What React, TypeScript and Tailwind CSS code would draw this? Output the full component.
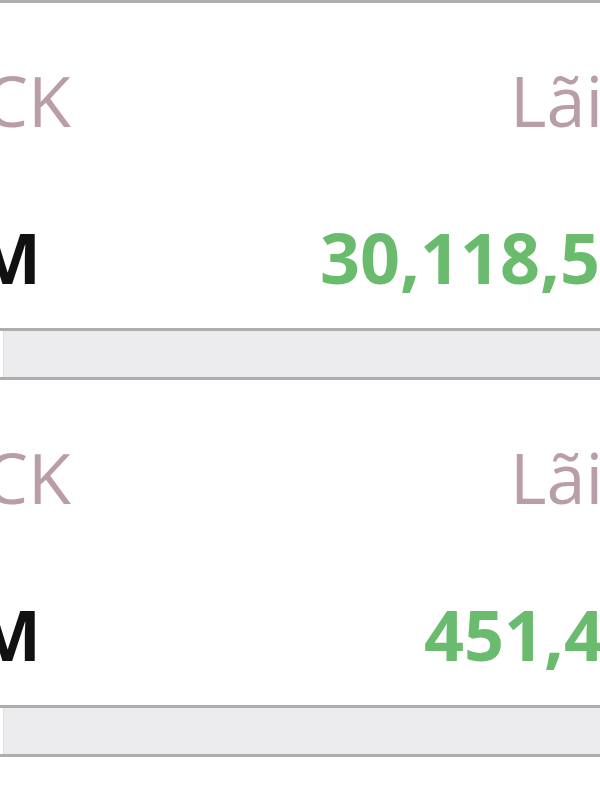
import React from "react";

const font = { fontFamily: '"Open Sans", "Noto Sans", sans-serif' };

function Band() {
  return (
    <div className="flex flex-col">
      <div className="h-[3px] bg-[#adadad]" />
      <div className="flex h-[46px]">
        <div className="w-[3px] bg-white" />
        <div className="w-[1px] bg-[#dedede]" />
        <div className="flex-1 bg-[#ececee]" />
      </div>
      <div className="h-[3px] bg-[#adadad]" />
    </div>
  );
}

function Block({ value, valueStart }: { value: string; valueStart: number }) {
  return (
    <div className="flex flex-col">
      <div className="h-[325px] bg-white pt-[62px]">
        <div className="flex whitespace-nowrap text-[70px] leading-none text-[#b99ea7]">
          <div className="-ml-[16px] w-[526px] shrink-0">CK</div>
          <div>Lãi/lỗ</div>
        </div>
        <div className="mt-[87px] flex whitespace-nowrap text-[70px] font-bold leading-none">
          <div className="-ml-[25px] shrink-0 text-[#111111]" style={{ width: valueStart + 25 }}>
            M
          </div>
          <div className="text-[#6abb6d]">{value}</div>
        </div>
      </div>
      <Band />
    </div>
  );
}

export default function App() {
  return (
    <div className="h-[800px] w-[600px] overflow-hidden bg-white" style={font}>
      <div className="h-[3px] bg-[#adadad]" />
      <Block value="30,118,500" valueStart={320} />
      <Block value="451,400" valueStart={424} />
    </div>
  );
}
